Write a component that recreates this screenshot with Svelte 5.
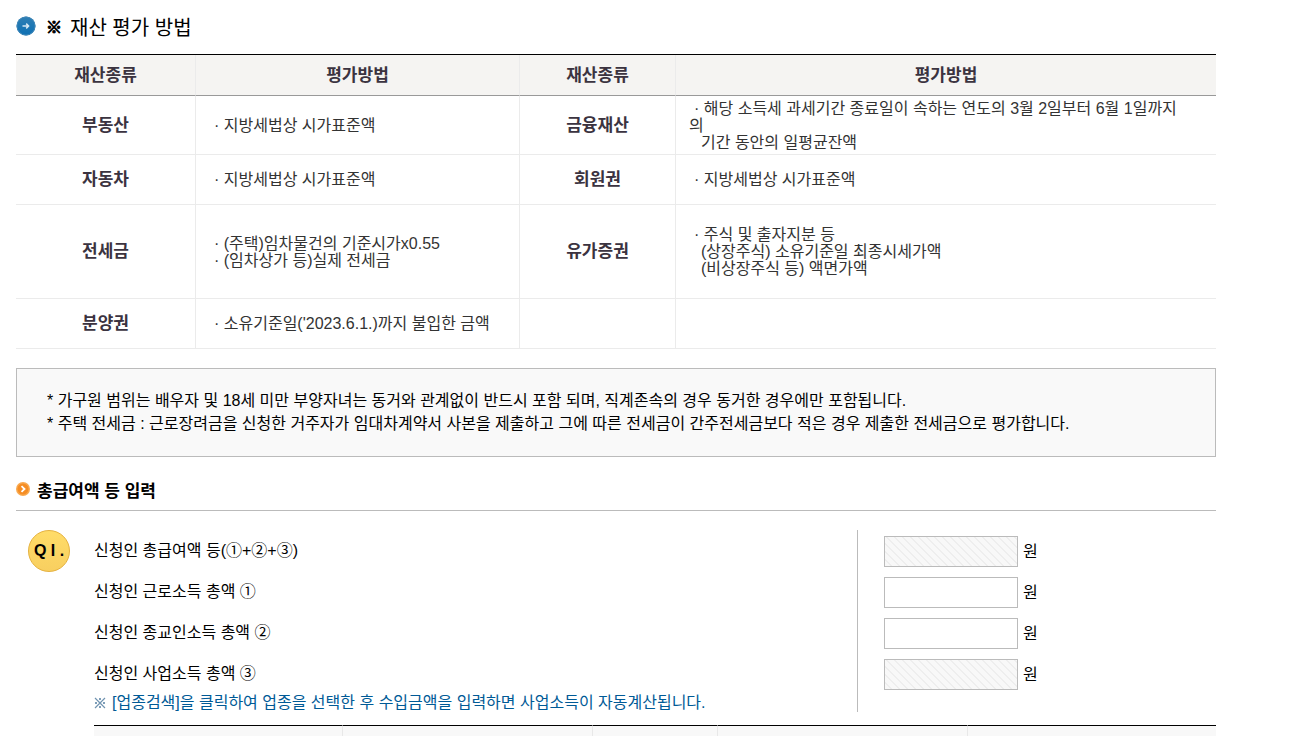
<script lang="ts">
	const assets = [
		{
			size: 'row-lg',
			left: '부동산',
			leftLines: ['· 지방세법상 시가표준액'],
			right: '금융재산',
			rightLines: [
				'· 해당 소득세 과세기간 종료일이 속하는 연도의 3월 2일부터 6월 1일까지',
				'의',
				'기간 동안의 일평균잔액'
			]
		},
		{
			size: 'row-md',
			left: '자동차',
			leftLines: ['· 지방세법상 시가표준액'],
			right: '회원권',
			rightLines: ['· 지방세법상 시가표준액']
		},
		{
			size: 'row-xl',
			left: '전세금',
			leftLines: ['· (주택)임차물건의 기준시가x0.55', '· (임차상가 등)실제 전세금'],
			right: '유가증권',
			rightLines: [
				'· 주식 및 출자지분 등',
				'(상장주식) 소유기준일 최종시세가액',
				'(비상장주식 등) 액면가액'
			]
		},
		{
			size: 'row-md',
			left: '분양권',
			leftLines: ["· 소유기준일('2023.6.1.)까지 불입한 금액"],
			right: '',
			rightLines: []
		}
	];

	const fields = $state([
		{ id: 'total', label: '신청인 총급여액 등(①+②+③)', disabled: true, value: '' },
		{ id: 'work', label: '신청인 근로소득 총액 ①', disabled: false, value: '' },
		{ id: 'religion', label: '신청인 종교인소득 총액 ②', disabled: false, value: '' },
		{ id: 'business', label: '신청인 사업소득 총액 ③', disabled: true, value: '' }
	]);

	// a line without a bullet is indented under the bullet text, a lone syllable is not
	function lineClass(line: string) {
		if (line.startsWith('·')) return 'bullet';
		return line.length > 1 ? 'sub' : '';
	}
</script>

<main>
	<h2>
		<svg width="20" height="20" viewBox="0 0 20 20" aria-hidden="true">
			<defs>
				<linearGradient id="blue" x1="0" y1="0" x2="0" y2="1">
					<stop offset="0" stop-color="#2f7fb4" />
					<stop offset="1" stop-color="#0d70b4" />
				</linearGradient>
			</defs>
			<circle cx="10" cy="10" r="9.5" fill="url(#blue)" />
			<circle cx="10" cy="10" r="9" fill="none" stroke="#3f86b6" stroke-width="1" />
			<path d="M6.500 10h6M10.200 7.600L12.600 10l-2.400 2.400" fill="none" stroke="#d6e8f3" stroke-width="1.500" />
		</svg>
		<span class="mark">※</span>
		<span>재산 평가 방법</span>
	</h2>

	<table class="assets">
		<thead>
			<tr>
				<th scope="col" class="kind">재산종류</th>
				<th scope="col" class="how">평가방법</th>
				<th scope="col" class="kind2">재산종류</th>
				<th scope="col">평가방법</th>
			</tr>
		</thead>
		<tbody>
			{#each assets as row}
				<tr class={row.size}>
					<th scope="row">{row.left}</th>
					<td>
						{#each row.leftLines as line}
							<div class={lineClass(line)}>{line}</div>
						{/each}
					</td>
					<th scope={row.right ? 'row' : undefined}>{row.right}</th>
					<td>
						{#each row.rightLines as line}
							<div class={lineClass(line)}>{line}</div>
						{/each}
					</td>
				</tr>
			{/each}
		</tbody>
	</table>

	<div class="notes">
		<p>* 가구원 범위는 배우자 및 18세 미만 부양자녀는 동거와 관계없이 반드시 포함 되며, 직계존속의 경우 동거한 경우에만 포함됩니다.</p>
		<p>* 주택 전세금 : 근로장려금을 신청한 거주자가 임대차계약서 사본을 제출하고 그에 따른 전세금이 간주전세금보다 적은 경우 제출한 전세금으로 평가합니다.</p>
	</div>

	<h3>
		<svg width="14" height="14" viewBox="0 0 14 14" aria-hidden="true">
			<circle cx="7" cy="7" r="7" fill="#f9a94f" />
			<circle cx="7" cy="7" r="5.500" fill="#f58d24" />
			<path d="M5.500 4.200L8.500 7l-3 2.800" fill="none" stroke="#fff" stroke-width="1.800" />
		</svg>
		총급여액 등 입력
	</h3>

	<section class="question">
		<div class="badge">Q I .</div>
		<div class="labels">
			{#each fields as field}
				<label for={field.id}>{field.label}</label>
			{/each}
			<p class="tip">
				<svg width="12" height="12" viewBox="0 0 12 12" aria-hidden="true">
					<path d="M1 1l10 10M11 1L1 11" stroke="#7093b0" stroke-width="1.200" />
					<path d="M5 1h2v2H5zM5 9h2v2H5zM1 5h2v2H1zM9 5h2v2H9z" fill="#7f9fb9" />
				</svg>
				[업종검색]을 클릭하여 업종을 선택한 후 수입금액을 입력하면 사업소득이 자동계산됩니다.
			</p>
		</div>
		<div class="values">
			{#each fields as field}
				<div class="value">
					<input type="text" id={field.id} disabled={field.disabled} bind:value={field.value} />
					<span>원</span>
				</div>
			{/each}
		</div>
	</section>

	<table class="business">
		<thead>
			<tr>
				<td class="wide"></td>
				<td class="wide"></td>
				<td class="narrow"></td>
				<td class="wide"></td>
				<td class="wide"></td>
			</tr>
		</thead>
	</table>
</main>

<style>
	:global(body) {
		background: #fff;
	}

	main {
		max-width: 1200px;
		margin-left: 16px;
		padding-top: 12px;
		font-family: 'Liberation Sans', 'Noto Sans CJK KR', sans-serif;
		font-size: 16px;
		color: #000;
	}

	h2 {
		display: flex;
		align-items: center;
		height: 28px;
		margin: 0 0 14px;
		font-size: 20px;
		font-weight: 400;
	}
	h2 svg {
		margin-right: 10px;
	}
	.mark {
		margin-right: 8px;
		font-size: 16px;
		-webkit-text-stroke: 1px #000;
	}

	table {
		border-collapse: separate;
		border-spacing: 0;
		table-layout: fixed;
	}

	.assets {
		width: 100%;
		border-top: 1px solid #000;
		line-height: 17px;
		color: #333;

		& th,
		& td {
			box-sizing: border-box;
			padding: 0;
			border-right: 1px solid #ebebeb;
			border-bottom: 1px solid #ebebeb;
		}
		& th:last-child,
		& td:last-child {
			border-right: 0;
		}
		& th {
			font-size: 17px;
			font-weight: 700;
			color: #3b3340;
			text-align: center;
		}
		& td {
			padding: 0 13px;
			text-align: left;
		}
		& thead th {
			height: 41px;
			background: #f5f4f2;
			border-bottom-color: #999;
		}
	}
	.assets .kind {
		width: 15%;
	}
	.assets .how {
		width: 27%;
	}
	.assets .kind2 {
		width: 13%;
	}
	.row-md {
		height: 50px;
	}
	.row-lg {
		height: 59px;
	}
	.row-xl {
		height: 94px;
	}
	.bullet {
		padding-left: 5px;
	}
	.sub {
		padding-left: 12px;
	}

	.notes {
		margin-top: 19px;
		padding: 20px 30px 21px;
		border: 1px solid #bbb;
		background: #f9f9f9;
		line-height: 23px;

		& p {
			margin: 0;
		}
	}

	h3 {
		display: flex;
		align-items: center;
		gap: 7px;
		height: 42px;
		margin: 11px 0 19px;
		border-bottom: 1px solid #bbb;
		font-size: 17px;
		font-weight: 700;
	}

	.question {
		display: flex;
	}
	.badge {
		box-sizing: border-box;
		flex: none;
		width: 42px;
		height: 42px;
		margin: 0 24px 0 12px;
		border: 1px solid #e5b13d;
		border-radius: 50%;
		background: linear-gradient(#ffdc68, #f8cf60);
		font-size: 16px;
		line-height: 40px;
		font-weight: 700;
		text-align: center;
		white-space: nowrap;
	}
	.labels {
		flex: 1;
	}
	.labels label {
		display: block;
		line-height: 41px;
	}
	.tip {
		display: flex;
		align-items: center;
		gap: 6px;
		margin: 0;
		line-height: 18px;
		color: #005a96;
	}
	.values {
		box-sizing: border-box;
		width: 359px;
		padding: 1px 0 0 26px;
		border-left: 1px solid #bbb;
	}
	.value {
		display: flex;
		align-items: center;
		gap: 5px;
		height: 41px;
	}
	.value span {
		padding-bottom: 3px;
	}
	input {
		box-sizing: border-box;
		width: 134px;
		height: 31px;
		margin: 0;
		padding: 0 8px;
		border: 1px solid #bbb;
		border-radius: 0;
		background: #fff;
		font: inherit;
		text-align: right;
	}
	input:disabled {
		background: #f8f8f8
			linear-gradient(
				45deg,
				#eee 16%,
				transparent 16% 50%,
				#eee 50% 66%,
				transparent 66%
			);
		background-size: 8px 8px;
	}

	.business {
		width: calc(100% - 78px);
		margin: 13px 0 0 78px;

		& td {
			height: 10px;
			padding: 0;
			border-top: 1px solid #000;
			border-right: 1px solid #e8e8e8;
			background: #f8f8f8;
		}
		& td:last-child {
			border-right: 0;
		}
		& .wide {
			width: 22%;
		}
		& .narrow {
			width: 11%;
		}
	}
</style>
